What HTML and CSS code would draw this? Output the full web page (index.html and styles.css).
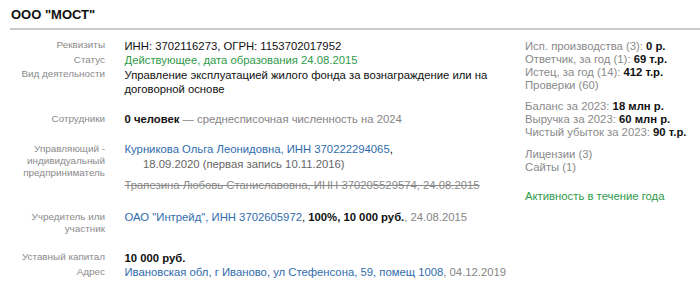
FILE: index.html
```html
<!DOCTYPE html>
<html lang="ru">
<head>
<meta charset="utf-8">
<link rel="stylesheet" href="styles.css">
</head>
<body>
<h1 class="title">ООО "МОСТ"</h1>
<div class="card">
  <div class="main">
    <div class="row">
      <div class="label">Реквизиты</div>
      <div class="value">ИНН: 3702116273, ОГРН: 1153702017952</div>
    </div>
    <div class="row">
      <div class="label">Статус</div>
      <div class="value green">Действующее, дата образования 24.08.2015</div>
    </div>
    <div class="row">
      <div class="label">Вид деятельности</div>
      <div class="value">Управление эксплуатацией жилого фонда за вознаграждение или на договорной основе</div>
    </div>
    <div class="row gap">
      <div class="label">Сотрудники</div>
      <div class="value"><b>0 человек</b> <span class="muted">— среднесписочная численность на 2024</span></div>
    </div>
    <div class="row gap">
      <div class="label">Управляющий - индивидуальный предприниматель</div>
      <div class="value">
        <div class="person"><a class="link" href="#">Курникова Ольга Леонидовна, ИНН 370222294065</a>,</div>
        <div class="since">18.09.2020 (первая запись 10.11.2016)</div>
        <div class="old">Трапезина Любовь Станиславовна, ИНН 370205529574, 24.08.2015</div>
      </div>
    </div>
    <div class="row gap">
      <div class="label">Учредитель или участник</div>
      <div class="value"><a class="link" href="#">ОАО "Интрейд", ИНН 3702605972</a>, <b>100%, 10 000 руб.</b><span class="muted">, 24.08.2015</span></div>
    </div>
    <div class="row gap">
      <div class="label">Уставный капитал</div>
      <div class="value"><b>10 000 руб.</b></div>
    </div>
    <div class="row">
      <div class="label">Адрес</div>
      <div class="value"><a class="link" href="#">Ивановская обл, г Иваново, ул Стефенсона, 59, помещ 1008</a><span class="muted">, 04.12.2019</span></div>
    </div>
  </div>
  <div class="side">
    <div class="group">
      <div>Исп. производства (3): <b>0 р.</b></div>
      <div>Ответчик, за год (1): <b>69 т.р.</b></div>
      <div>Истец, за год (14): <b>412 т.р.</b></div>
      <div>Проверки (60)</div>
    </div>
    <div class="group">
      <div>Баланс за 2023: <b>18 млн р.</b></div>
      <div>Выручка за 2023: <b>60 млн р.</b></div>
      <div>Чистый убыток за 2023: <b>90 т.р.</b></div>
    </div>
    <div class="group">
      <div>Лицензии (3)</div>
      <div>Сайты (1)</div>
    </div>
    <div class="group activity">Активность в течение года</div>
  </div>
</div>
</body>
</html>
```
FILE: styles.css
```css
* { box-sizing: border-box; }
body {
  margin: 0;
  padding: 0 0 0 10px;
  background: #fff;
  font-family: "Liberation Sans", Arial, sans-serif;
  color: #111;
}
.title {
  margin: 0;
  padding: 7px 0 0 1px;
  font-size: 13px;
  font-weight: bold;
  line-height: 15px;
  height: 28px;
  color: #111;
}
.card {
  border-top: 2px solid #cacaca;
  display: flex;
  padding-top: 8.75px;
}
.main {
  width: 515px;
  flex: none;
  font-size: 11.3px;
  line-height: 14.5px;
}
.row {
  display: grid;
  grid-template-columns: 95px 1fr;
  column-gap: 19.5px;
}
.row.gap { margin-top: 15.5px; }
.label {
  text-align: right;
  color: #8a8a8a;
  font-size: 9.9px;
  line-height: 12.2px;
  padding-top: 0.5px;
}
.value b { font-weight: bold; }
.green { color: #2f9a4b; }
.muted { color: #858585; }
.link { color: #2f6cad; text-decoration: none; }
.since { padding-left: 18.5px; color: #666; }
.old {
  margin-top: 7px;
  margin-bottom: 2px;
  color: #8a8a8a;
  text-decoration: line-through;
}
.side {
  font-size: 11.3px;
  line-height: 12.8px;
  color: #8a8a8a;
  padding-top: 1.5px;
}
.side b { color: #111; font-weight: bold; }
.group + .group { margin-top: 9px; }
.group.activity { margin-top: 17px; color: #2f9a4b; }
```
